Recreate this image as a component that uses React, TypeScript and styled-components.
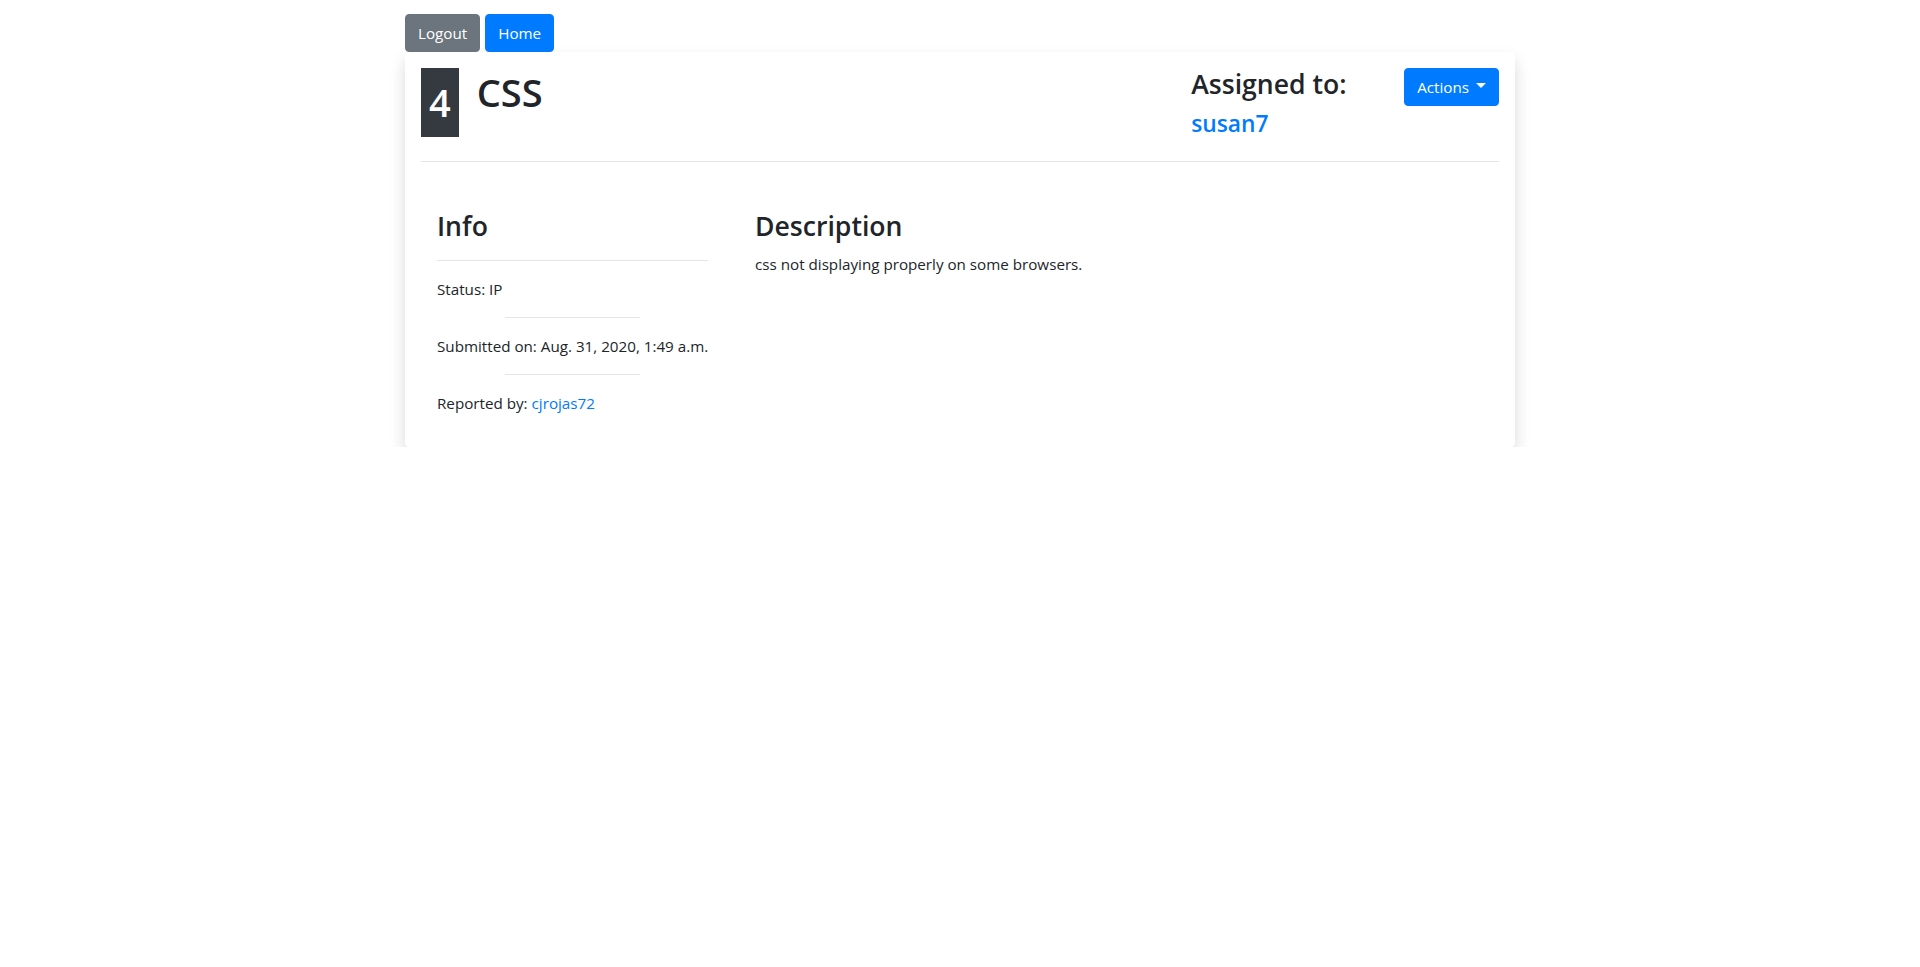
import React from "react";
import styled, { createGlobalStyle } from "styled-components";

// Open Sans runs a bit larger than the original UI font, so sizes are scaled
// down ~5% while line heights stay on the Bootstrap grid.
const GlobalStyle = createGlobalStyle`
  html, body {
    margin: 0;
    padding: 0;
    background: #fff;
  }
  body {
    font-family: "Open Sans", "Noto Sans", sans-serif;
    font-size: 15.2px;
    line-height: 24px;
    color: #212529;
  }
  * {
    box-sizing: border-box;
  }
`;

const Container = styled.div`
  max-width: 1140px;
  margin: 0 auto;
  padding: 14px 15px 0;
`;

const NavBar = styled.div`
  display: flex;
  gap: 5px;
`;

const Button = styled.button<{ variant?: "secondary" | "primary" }>`
  display: inline-flex;
  align-items: center;
  font-family: inherit;
  font-size: 15.2px;
  line-height: 24px;
  padding: 6px 12px;
  border-radius: 4px;
  border: 1px solid
    ${({ variant }) => (variant === "secondary" ? "#6c757d" : "#007bff")};
  background-color: ${({ variant }) =>
    variant === "secondary" ? "#6c757d" : "#007bff"};
  color: #fff;
  cursor: pointer;
`;

const Caret = styled.span`
  display: inline-block;
  margin-left: 7px;
  margin-bottom: 3px;
  border-top: 5px solid #fff;
  border-left: 5px solid transparent;
  border-right: 5px solid transparent;
`;

const Card = styled.div`
  background: #fff;
  border-radius: 4px;
  box-shadow: 0 8px 16px rgba(0, 0, 0, 0.15);
  padding: 16px 16px 0;
`;

const Header = styled.div`
  display: flex;
  justify-content: space-between;
  align-items: flex-start;
`;

const TitleGroup = styled.div`
  display: flex;
  align-items: flex-start;
  gap: 18px;
`;

const Badge = styled.div`
  background-color: #343a40;
  color: #fff;
  font-size: 38px;
  line-height: 48px;
  font-weight: 600;
  padding: 10px 8px 11px;
`;

const Title = styled.h1`
  margin: 0;
  font-size: 38px;
  line-height: 48px;
  font-weight: 600;
`;

const AssignGroup = styled.div`
  display: flex;
  align-items: flex-start;
`;

const Assigned = styled.div`
  width: 213px;
`;

const Heading = styled.h3`
  margin: 0 0 8px;
  font-size: 26.6px;
  line-height: 33.6px;
  font-weight: 600;
`;

const Assignee = styled.h4`
  margin: 0 0 7px;
  font-size: 22.8px;
  line-height: 28.8px;
  font-weight: 600;
`;

const Link = styled.a`
  color: #007bff;
  text-decoration: none;
`;

const Rule = styled.hr<{ short?: boolean }>`
  border: 0;
  border-top: 1px solid rgba(0, 0, 0, 0.1);
  margin: 16px auto;
  width: ${({ short }) => (short ? "50%" : "100%")};
`;

const Body = styled.div`
  display: flex;
  gap: 47px;
  padding: 32px 16px;
`;

const InfoCol = styled.div`
  width: 271px;
  flex-shrink: 0;
`;

const DescCol = styled.div`
  flex: 1;
`;

const Line = styled.p`
  margin: 0;
  line-height: 24px;
  white-space: nowrap;
`;

export default function App() {
  return (
    <>
      <GlobalStyle />
      <Container>
        <NavBar>
          <Button variant="secondary">Logout</Button>
          <Button variant="primary">Home</Button>
        </NavBar>
        <Card>
          <Header>
            <TitleGroup>
              <Badge>4</Badge>
              <Title>CSS</Title>
            </TitleGroup>
            <AssignGroup>
              <Assigned>
                <Heading>Assigned to:</Heading>
                <Assignee>
                  <Link href="#">susan7</Link>
                </Assignee>
              </Assigned>
              <Button variant="primary">
                Actions
                <Caret />
              </Button>
            </AssignGroup>
          </Header>
          <Rule />
          <Body>
            <InfoCol>
              <Heading>Info</Heading>
              <Rule />
              <Line>Status: IP</Line>
              <Rule short />
              <Line>Submitted on: Aug. 31, 2020, 1:49 a.m.</Line>
              <Rule short />
              <Line>
                Reported by: <Link href="#">cjrojas72</Link>
              </Line>
            </InfoCol>
            <DescCol>
              <Heading>Description</Heading>
              <Line>css not displaying properly on some browsers.</Line>
            </DescCol>
          </Body>
        </Card>
      </Container>
    </>
  );
}
